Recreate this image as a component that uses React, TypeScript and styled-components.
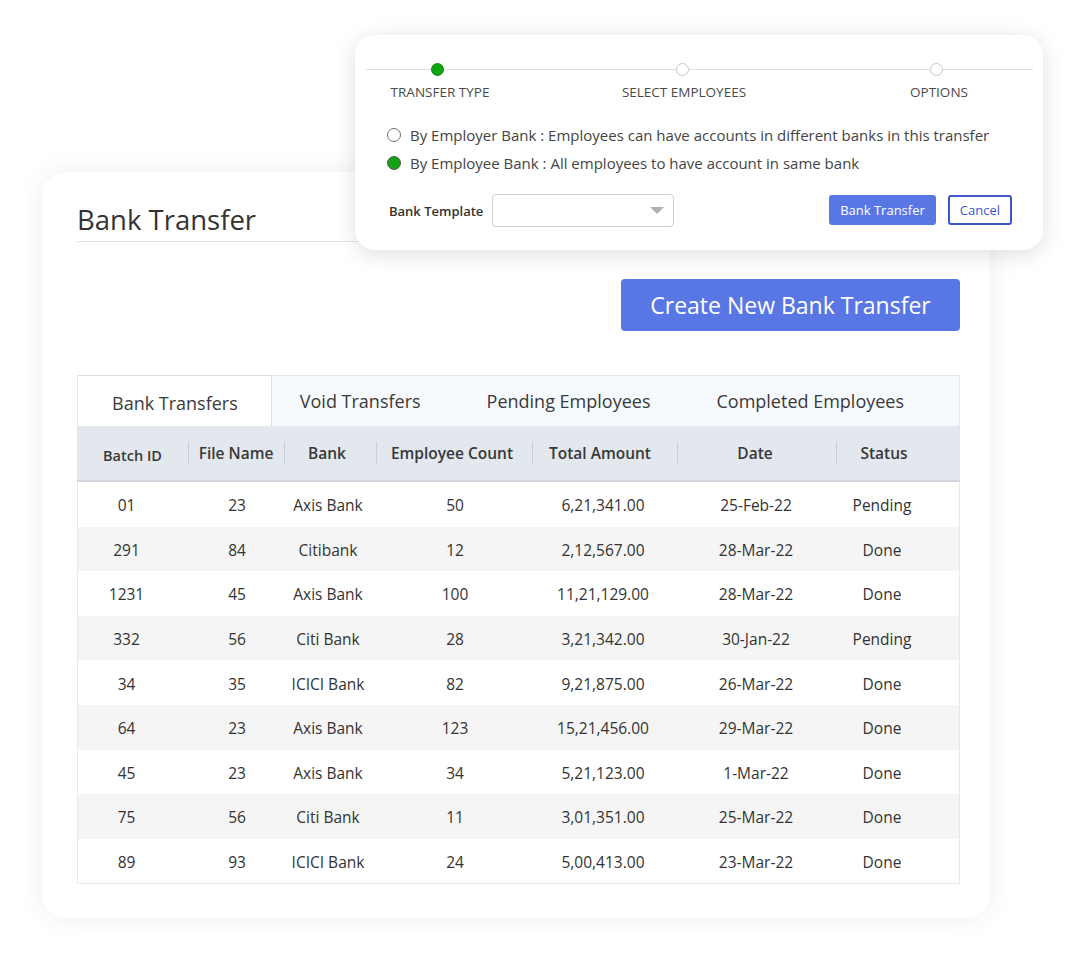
import styled, { createGlobalStyle } from 'styled-components'

const GlobalStyle = createGlobalStyle`
    body {
        margin: 0;
        background: #ffffff;
        font-family: "Open Sans", "Noto Sans", sans-serif;
        color: #333333;
    }
    * {
        box-sizing: border-box;
    }
`

const Page = styled.div`
    position: relative;
    width: 1084px;
    height: 972px;
    overflow: hidden;
    padding: 172px 0 0 42px;
`

const Card = styled.div`
    width: 948px;
    height: 746px;
    background: #ffffff;
    border-radius: 24px;
    box-shadow: 0 0 28px rgba(0, 0, 0, 0.07);
    padding: 30px 30px 0 35px;
    display: flex;
    flex-direction: column;
`

const Title = styled.h1`
    margin: 0;
    font-size: 27.5px;
    font-weight: 500;
    line-height: 36px;
    color: #333333;
    padding-bottom: 3px;
    border-bottom: 1px solid #e3e3e3;
`

const ActionBar = styled.div`
    display: flex;
    justify-content: flex-end;
    margin-top: 37px;
`

const PrimaryButton = styled.button`
    width: 339px;
    height: 52px;
    border: none;
    border-radius: 4px;
    background: #5877e5;
    color: #ffffff;
    font-family: inherit;
    font-size: 23px;
    cursor: pointer;
`

const TableBox = styled.div`
    margin-top: 44px;
    border: 1px solid #e6e9ee;
    border-top: none;
`

const TabBar = styled.div`
    display: flex;
    height: 51px;
    background: #f6f9fd;
    border-top: 1px solid #e6eaf0;
`

const Tab = styled.div<{ $active?: boolean }>`
    display: flex;
    align-items: center;
    padding: ${(p) => (p.$active ? '4px 33px 0 34px' : '0 38px 0 28px')};
    font-size: 18px;
    color: #3a3a3a;
    background: ${(p) => (p.$active ? '#ffffff' : 'transparent')};
    border-right: ${(p) => (p.$active ? '1px solid #dcdfe4' : 'none')};
    border-top: ${(p) => (p.$active ? '1px solid #dcdfe4' : 'none')};
    margin-top: ${(p) => (p.$active ? '-1px' : '0')};
`

const cols = '111px 96px 92px 156px 145px 159px 1fr'

const HeadRow = styled.div`
    display: grid;
    grid-template-columns: ${cols};
    height: 56px;
    background: #e3e8ef;
    border-bottom: 2px solid #d3d8df;
    margin: 0 -1px;
`

const HeadCell = styled.div<{ $sep?: boolean; $pr?: number; $dy?: number; $size?: number }>`
    display: flex;
    align-items: center;
    justify-content: center;
    font-size: ${(p) => p.$size ?? 15.5}px;
    font-weight: 600;
    color: #383838;
    padding-right: ${(p) => p.$pr ?? 0}px;
    padding-top: ${(p) => p.$dy ?? 0}px;
    background: ${(p) =>
        p.$sep
            ? 'linear-gradient(#c9ced6, #c9ced6) left center / 1px 22px no-repeat'
            : 'none'};
`

const Row = styled.div<{ $alt?: boolean }>`
    display: grid;
    grid-template-columns: ${cols};
    height: 44.6px;
    background: ${(p) => (p.$alt ? '#f5f5f5' : '#ffffff')};
`

const Cell = styled.div<{ $pr?: number }>`
    display: flex;
    align-items: center;
    justify-content: center;
    padding-top: 2px;
    font-size: 15.5px;
    font-weight: 500;
    color: #333333;
    padding-right: ${(p) => p.$pr ?? 0}px;
`

const Overlay = styled.div`
    position: absolute;
    left: 355px;
    top: 35px;
    width: 688px;
    height: 215px;
    background: #ffffff;
    border-radius: 20px;
    box-shadow: 0 4px 22px rgba(0, 0, 0, 0.13);
    padding: 28px 0 0 0;
`

const Stepper = styled.div`
    display: grid;
    grid-template-columns: 142px 348px 160px;
    margin: 0 10px 0 11px;
    background: linear-gradient(#dddddd, #dddddd) 0 6px / 100% 1px no-repeat;
`

const Step = styled.div`
    display: flex;
    flex-direction: column;
    align-items: center;
    gap: 7px;
`

const Dot = styled.span<{ $done?: boolean }>`
    width: 13px;
    height: 13px;
    border-radius: 50%;
    background: ${(p) => (p.$done ? '#12a312' : '#ffffff')};
    border: 1px solid ${(p) => (p.$done ? '#0e8a0e' : '#c8c8c8')};
`

const StepLabel = styled.span<{ $dx?: number }>`
    font-size: 13.5px;
    line-height: 18px;
    color: #4a4a4a;
    text-transform: uppercase;
    margin-left: ${(p) => p.$dx ?? 0}px;
`

const Options = styled.div`
    display: flex;
    flex-direction: column;
    margin-top: 20px;
    padding-left: 32px;
`

const OptionRow = styled.label`
    display: flex;
    align-items: center;
    gap: 9px;
    height: 28px;
    font-size: 15px;
    color: #444444;
`

const Radio = styled.span<{ $checked?: boolean }>`
    width: 14px;
    height: 14px;
    border-radius: 50%;
    border: 1.5px solid ${(p) => (p.$checked ? '#5c5c5c' : '#6f6f6f')};
    background: ${(p) => (p.$checked ? '#12a312' : '#ffffff')};
    box-shadow: ${(p) => (p.$checked ? 'inset 0 0 0 1px #12a312' : 'none')};
`

const FormRow = styled.div`
    display: flex;
    align-items: center;
    height: 33px;
    margin-top: 17px;
    padding: 0 31px 0 34px;
`

const FieldLabel = styled.span`
    font-size: 13px;
    font-weight: 600;
    color: #333333;
    margin-right: 9px;
`

const Select = styled.div`
    display: flex;
    align-items: center;
    justify-content: flex-end;
    width: 182px;
    height: 33px;
    border: 1px solid #cfcfcf;
    border-radius: 4px;
    padding-right: 9px;
`

const Caret = styled.span`
    width: 0;
    height: 0;
    border-left: 7px solid transparent;
    border-right: 7px solid transparent;
    border-top: 7px solid #b0b0b0;
`

const Spacer = styled.div`
    flex: 1;
`

const SmallButton = styled.button<{ $outline?: boolean }>`
    height: 30px;
    padding: 0 ${(p) => (p.$outline ? '10px' : '11px')};
    margin-left: ${(p) => (p.$outline ? '12px' : '0')};
    margin-top: -2px;
    border-radius: 3px;
    font-family: inherit;
    font-size: 13px;
    cursor: pointer;
    background: ${(p) => (p.$outline ? '#ffffff' : '#5877e5')};
    color: ${(p) => (p.$outline ? '#3d57c9' : '#ffffff')};
    border: ${(p) => (p.$outline ? '2px solid #3d57c9' : 'none')};
`

const headers = [
    { label: 'Batch ID', pr: 0, dy: 4, size: 14.5 },
    { label: 'File Name', pr: 0 },
    { label: 'Bank', pr: 6 },
    { label: 'Employee Count', pr: 4 },
    { label: 'Total Amount', pr: 9 },
    { label: 'Date', pr: 3 },
    { label: 'Status', pr: 28 },
]

const cellPad = [14, 0, 6, 0, 5, 3, 32]

const rows = [
    ['01', '23', 'Axis Bank', '50', '6,21,341.00', '25-Feb-22', 'Pending'],
    ['291', '84', 'Citibank', '12', '2,12,567.00', '28-Mar-22', 'Done'],
    ['1231', '45', 'Axis Bank', '100', '11,21,129.00', '28-Mar-22', 'Done'],
    ['332', '56', 'Citi Bank', '28', '3,21,342.00', '30-Jan-22', 'Pending'],
    ['34', '35', 'ICICI Bank', '82', '9,21,875.00', '26-Mar-22', 'Done'],
    ['64', '23', 'Axis Bank', '123', '15,21,456.00', '29-Mar-22', 'Done'],
    ['45', '23', 'Axis Bank', '34', '5,21,123.00', '1-Mar-22', 'Done'],
    ['75', '56', 'Citi Bank', '11', '3,01,351.00', '25-Mar-22', 'Done'],
    ['89', '93', 'ICICI Bank', '24', '5,00,413.00', '23-Mar-22', 'Done'],
]

const tabs = ['Bank Transfers', 'Void Transfers', 'Pending Employees', 'Completed Employees']

const App = () => {
    return (
        <Page>
            <GlobalStyle />
            <Card>
                <Title>Bank Transfer</Title>
                <ActionBar>
                    <PrimaryButton>Create New Bank Transfer</PrimaryButton>
                </ActionBar>
                <TableBox>
                    <TabBar>
                        {tabs.map((t, i) => (
                            <Tab key={t} $active={i === 0}>
                                {t}
                            </Tab>
                        ))}
                    </TabBar>
                    <HeadRow>
                        {headers.map((h, i) => (
                            <HeadCell
                                key={h.label}
                                $sep={i > 0}
                                $pr={h.pr}
                                $dy={h.dy}
                                $size={h.size}
                            >
                                {h.label}
                            </HeadCell>
                        ))}
                    </HeadRow>
                    {rows.map((r, i) => (
                        <Row key={r[0] + i} $alt={i % 2 === 1}>
                            {r.map((v, j) => (
                                <Cell key={j} $pr={cellPad[j]}>
                                    {v}
                                </Cell>
                            ))}
                        </Row>
                    ))}
                </TableBox>
            </Card>

            <Overlay>
                <Stepper>
                    <Step>
                        <Dot $done />
                        <StepLabel $dx={6}>Transfer Type</StepLabel>
                    </Step>
                    <Step>
                        <Dot />
                        <StepLabel $dx={4}>Select Employees</StepLabel>
                    </Step>
                    <Step>
                        <Dot />
                        <StepLabel $dx={6}>Options</StepLabel>
                    </Step>
                </Stepper>
                <Options>
                    <OptionRow>
                        <Radio />
                        By Employer Bank : Employees can have accounts in different banks in this transfer
                    </OptionRow>
                    <OptionRow>
                        <Radio $checked />
                        By Employee Bank : All employees to have account in same bank
                    </OptionRow>
                </Options>
                <FormRow>
                    <FieldLabel>Bank Template</FieldLabel>
                    <Select>
                        <Caret />
                    </Select>
                    <Spacer />
                    <SmallButton>Bank Transfer</SmallButton>
                    <SmallButton $outline>Cancel</SmallButton>
                </FormRow>
            </Overlay>
        </Page>
    )
}

export default App
